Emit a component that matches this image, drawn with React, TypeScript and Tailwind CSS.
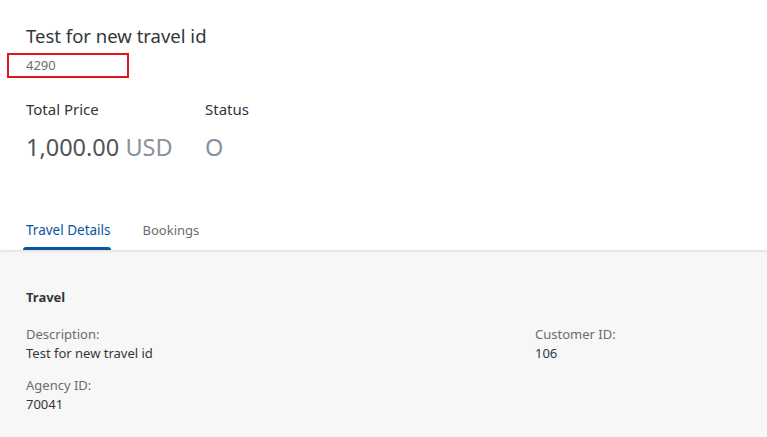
const font = { fontFamily: '"Noto Sans", "Open Sans", Arial, sans-serif' };

function Field({ label, value }: { label: string; value: string }) {
  return (
    <div className="flex flex-col">
      <span className="text-[13px] leading-[19px] text-[#6a6d70]">{label}</span>
      <span className="text-[13px] leading-[19px] text-[#32363a]">{value}</span>
    </div>
  );
}

export default function App() {
  return (
    <div
      className="flex h-[437px] w-[767px] flex-col overflow-hidden bg-white"
      style={font}
    >
      <header className="relative z-10 bg-white shadow-[0_1px_3px_rgba(0,0,0,0.12)]">
        <div className="px-[26px] pt-[22px]">
          <h1 className="text-[18.5px] leading-[28px] text-[#32363a]">
            Test for new travel id
          </h1>
        </div>
        <div className="ml-[7px] mt-[3px] flex h-[25px] w-[122px] items-center border-2 border-[#e0161e] pl-[17px] text-[13px] text-[#6a6d70]">
          4290
        </div>

        <div className="mt-[20px] flex px-[26px]">
          <div className="w-[179px]">
            <div className="text-[15px] leading-[22px] text-[#32363a]">Total Price</div>
            <div className="mt-[12px] text-[23.5px] leading-[30px]">
              <span className="text-[#515456]">1,000.00</span>{" "}
              <span className="text-[#89919a]">USD</span>
            </div>
          </div>
          <div>
            <div className="text-[15px] leading-[22px] text-[#32363a]">Status</div>
            <div className="mt-[12px] text-[23.5px] leading-[30px] text-[#89919a]">O</div>
          </div>
        </div>

        <nav className="mt-[58px] flex items-start px-[23px] leading-[20px]">
          <button type="button" className="flex flex-col">
            <span className="px-[3px] pb-[7px] text-[13.5px] leading-[20px] text-[#0854a0]">
              Travel Details
            </span>
            <span className="h-[3px] w-[88px] rounded-t-sm bg-[#0854a0]" />
          </button>
          <button type="button" className="ml-[29px] block text-[13px] leading-[20px] text-[#6a6d70]">
            Bookings
          </button>
        </nav>
      </header>

      <main className="flex-1 bg-[#f7f7f7] px-[26px] pt-[38px]">
        <h2 className="text-[13px] font-bold leading-[18px] text-[#32363a]">Travel</h2>
        <div className="mt-[19px] grid grid-cols-[509px_1fr]">
          <div className="flex flex-col gap-[13px]">
            <Field label="Description:" value="Test for new travel id" />
            <Field label="Agency ID:" value="70041" />
          </div>
          <div>
            <Field label="Customer ID:" value="106" />
          </div>
        </div>
      </main>
    </div>
  );
}
